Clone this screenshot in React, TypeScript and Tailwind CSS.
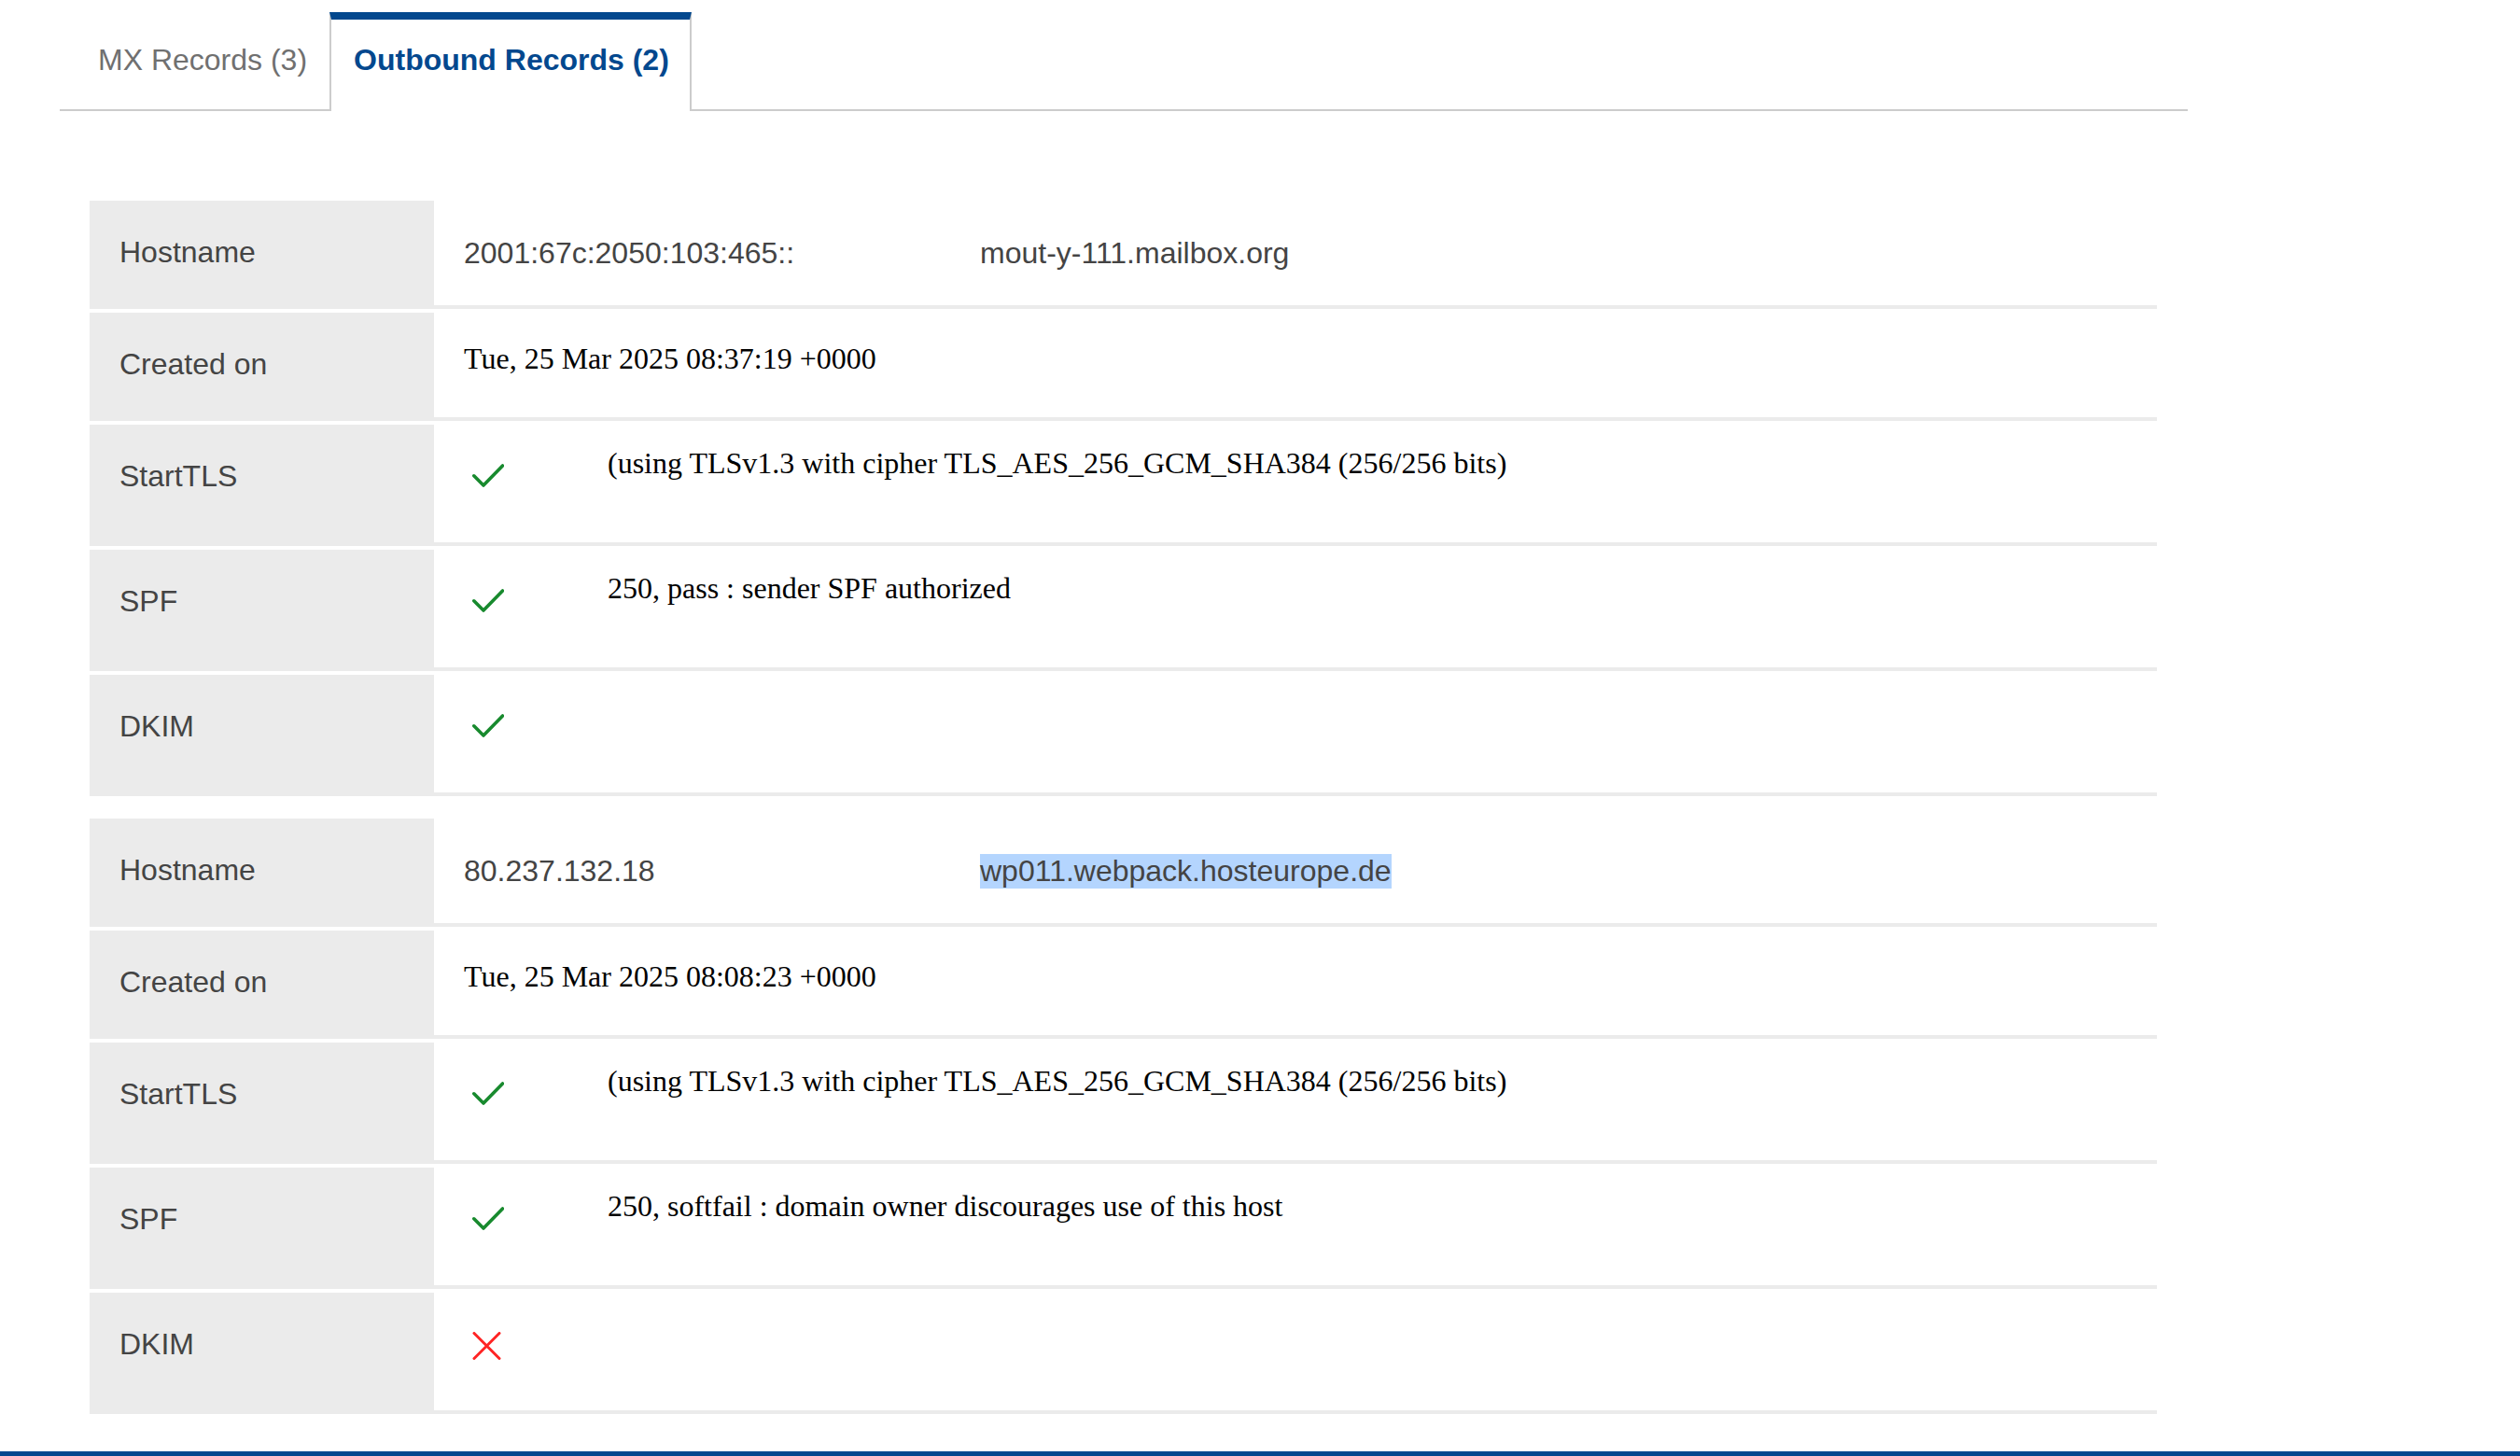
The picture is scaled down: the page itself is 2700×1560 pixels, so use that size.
import React from "react";

type Row =
  | { kind: "host"; label: string; ip: string; name: string; selected?: boolean }
  | { kind: "date"; label: string; value: string }
  | { kind: "status"; label: string; ok: boolean; note?: string };

const RECORDS: Row[][] = [
  [
    { kind: "host", label: "Hostname", ip: "2001:67c:2050:103:465::", name: "mout-y-111.mailbox.org" },
    { kind: "date", label: "Created on", value: "Tue, 25 Mar 2025 08:37:19 +0000" },
    { kind: "status", label: "StartTLS", ok: true, note: "(using TLSv1.3 with cipher TLS_AES_256_GCM_SHA384 (256/256 bits)" },
    { kind: "status", label: "SPF", ok: true, note: "250, pass : sender SPF authorized" },
    { kind: "status", label: "DKIM", ok: true },
  ],
  [
    { kind: "host", label: "Hostname", ip: "80.237.132.18", name: "wp011.webpack.hosteurope.de", selected: true },
    { kind: "date", label: "Created on", value: "Tue, 25 Mar 2025 08:08:23 +0000" },
    { kind: "status", label: "StartTLS", ok: true, note: "(using TLSv1.3 with cipher TLS_AES_256_GCM_SHA384 (256/256 bits)" },
    { kind: "status", label: "SPF", ok: true, note: "250, softfail : domain owner discourages use of this host" },
    { kind: "status", label: "DKIM", ok: false },
  ],
];

function Check() {
  return (
    <svg width="34" height="25" viewBox="0 0 34 25" fill="none">
      <path d="M1.8 12.8 L12 23 L32.5 2" stroke="#188a2e" strokeWidth="3.6" strokeLinecap="round" strokeLinejoin="round" />
    </svg>
  );
}

function Cross() {
  return (
    <svg width="31" height="30" viewBox="0 0 31 30" fill="none">
      <path d="M2 1.5 L29 28.5 M29 1.5 L2 28.5" stroke="#ff2424" strokeWidth="3" strokeLinecap="round" />
    </svg>
  );
}

function RecordRow({ row }: { row: Row }) {
  const tall = row.kind === "status";
  return (
    <div className={tall ? "flex h-[130px]" : "flex h-[116px]"}>
      <div
        className={
          tall
            ? "flex w-[369px] shrink-0 items-center bg-[#ebebeb] pb-[20px] pl-[32px] text-[#444]"
            : "flex w-[369px] shrink-0 items-center bg-[#ebebeb] pb-[5px] pl-[32px] text-[#444]"
        }
      >
        {row.label}
      </div>
      {row.kind === "host" && (
        <div className="flex flex-1 items-center border-b-4 border-[#ebebeb] pl-[32px] text-[#444]">
          <span className="w-[553px]">{row.ip}</span>
          <span className={row.selected ? "bg-[#b4d5fe]" : ""}>{row.name}</span>
        </div>
      )}
      {row.kind === "date" && (
        <div className="flex flex-1 items-center border-b-4 border-[#ebebeb] pb-[13px] pl-[32px] font-['Liberation_Serif',serif] text-black">
          {row.value}
        </div>
      )}
      {row.kind === "status" && (
        <div className="flex flex-1 items-start border-b-4 border-[#ebebeb] pl-[32px]">
          <div className="w-[154px] shrink-0 pl-[9px] pt-[42px]">{row.ok ? <Check /> : <Cross />}</div>
          {row.note && (
            <div className="pt-[23px] font-['Liberation_Serif',serif] leading-[37px] text-black">{row.note}</div>
          )}
        </div>
      )}
    </div>
  );
}

export default function App() {
  return (
    <div className="min-h-screen bg-white font-['Liberation_Sans',Arial,sans-serif] text-[32px]">
      {/* Tabs */}
      <div className="ml-[64px] mt-[13px] flex w-[2280px] border-b-2 border-[#ccc] pl-[15px] leading-[37px]">
        <button
          type="button"
          className="-mb-[2px] border-t-8 border-transparent pb-[36px] pl-[26px] pr-[24px] pt-[25px] text-[#707070]"
        >
          MX Records (3)
        </button>
        <button
          type="button"
          className="-mb-[2px] border-x-2 border-t-8 border-x-[#ccc] border-t-[#03488e] bg-white pb-[36px] pl-[24px] pr-[22px] pt-[25px] font-bold text-[#03488e]"
        >
          Outbound Records (2)
        </button>
      </div>

      {/* Outbound records */}
      <div className="ml-[96px] mt-[96px] flex w-[2215px] flex-col gap-[24px] leading-[37px]">
        {RECORDS.map((rows, i) => (
          <div key={i} className="flex flex-col gap-[4px]">
            {rows.map((row, j) => (
              <RecordRow key={j} row={row} />
            ))}
          </div>
        ))}
      </div>

      <div className="mt-[40px] h-[5px] w-full bg-[#03488e]" />
    </div>
  );
}
